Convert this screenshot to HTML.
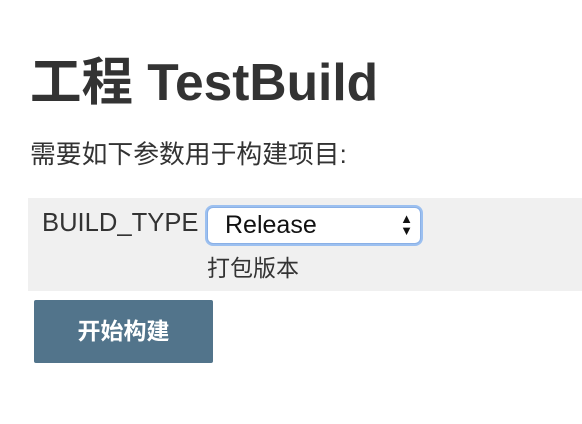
<!DOCTYPE html>
<html><head><meta charset="utf-8"><style>
body{margin:0;width:582px;height:424px;background:#fff;font-family:"Liberation Sans","Noto Sans CJK SC",sans-serif;color:#333;position:relative;overflow:hidden}
h1{position:absolute;left:30px;top:50px;margin:0;font-size:51.5px;font-weight:bold;color:#333;line-height:64px;white-space:nowrap}
.sub{position:absolute;left:30px;top:139px;font-size:25.8px;line-height:32px}
.box{position:absolute;left:28px;top:198px;width:554px;height:93px;background:#f0f0f0}
.lbl{position:absolute;left:42px;top:209px;font-size:25.6px;line-height:28px;color:#333}
.sel{position:absolute;left:207px;top:207px;width:212px;height:35px;border:1px solid #8ab0e6;border-radius:6px;background:#fff;box-shadow:0 0 0 2px #9cc0f0;font-size:25px;line-height:35px;color:#111}
.sel span{position:absolute;left:17px}
.arr{position:absolute;right:7px;top:5px;font-size:13px;line-height:12px}
.desc{position:absolute;left:207px;top:253px;font-size:23px;line-height:30px}
.btn{position:absolute;left:34px;top:300px;width:179px;height:63px;background:#52748b;border-radius:2px;color:#fff;font-size:23px;font-weight:bold;line-height:63px;text-align:center}
</style></head><body>
<h1>工程 TestBuild</h1>
<div class="sub">需要如下参数用于构建项目:</div>
<div class="box"></div>
<div class="lbl">BUILD_TYPE</div>
<div class="sel"><span>Release</span><div class="arr">▲<br>▼</div></div>
<div class="desc">打包版本</div>
<div class="btn">开始构建</div>
</body></html>
